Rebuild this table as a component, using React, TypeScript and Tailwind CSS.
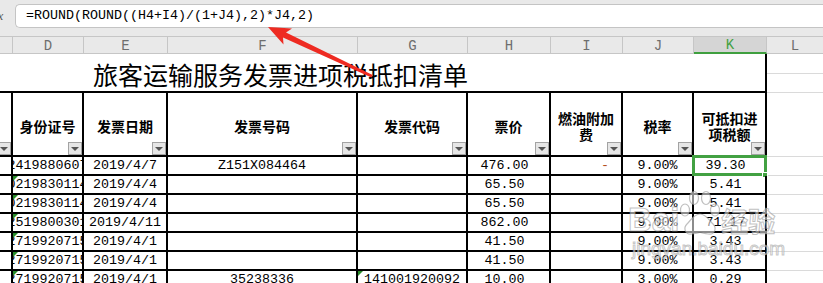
import React from "react";

const GRID = "grid grid-cols-[13px_71px_84px_190px_110px_83px_72px_71px_73px_56px]";
const MONO = "font-['Liberation_Mono',monospace]";
const CJK = "font-['Noto_Sans_CJK_SC','Noto_Sans',sans-serif]";

type Row = {
  id: string;
  date: string;
  no?: string;
  code?: string;
  price: string;
  fuel?: string;
  rate: string;
  tax: string;
  tri?: boolean;
  codeTri?: boolean;
  sel?: boolean;
};

const rows: Row[] = [
  { id: "410224198806070517", date: "2019/4/7", no: "Z151X084464", price: "476.00\u00a0", fuel: "-", rate: "9.00%", tax: "39.30\u00a0", sel: true },
  { id: "410502198301142036", date: "2019/4/4", price: "65.50\u00a0", rate: "9.00%", tax: "5.41\u00a0", tri: true },
  { id: "410502198301142036", date: "2019/4/4", price: "65.50\u00a0", rate: "9.00%", tax: "5.41\u00a0", tri: true },
  { id: "410425198003011518", date: "2019/4/11", price: "862.00\u00a0", rate: "9.00%", tax: "71.17\u00a0", tri: true },
  { id: "410527199207153021", date: "2019/4/1", price: "41.50\u00a0", rate: "9.00%", tax: "3.43\u00a0", tri: true },
  { id: "410527199207153021", date: "2019/4/1", price: "41.50\u00a0", rate: "9.00%", tax: "3.43\u00a0", tri: true },
  { id: "410527199207153021", date: "2019/4/1", no: "35238336", code: "141001920092", price: "10.00\u00a0", rate: "3.00%", tax: "0.29\u00a0", tri: true, codeTri: true },
];

function FilterBtn() {
  return (
    <div className="absolute right-0 bottom-0 w-[14px] h-[13px] bg-[#e6e6e6] border border-[#a3a3a3] flex items-center justify-center">
      <div className="w-0 h-0 border-l-[4px] border-r-[4px] border-t-[4px] border-l-transparent border-r-transparent border-t-[#555555] mt-[1px]" />
    </div>
  );
}

function HCell({ children }: { children?: React.ReactNode }) {
  return (
    <div className="relative h-[64px] border-r-2 border-b-2 border-black overflow-hidden flex items-center justify-center text-center pt-[3px] text-[14px] font-bold leading-[16px] text-black">
      {children}
      <FilterBtn />
    </div>
  );
}

function DCell({ children, className }: { children?: React.ReactNode; className?: string }) {
  return (
    <div className={"relative h-[19px] border-r-2 border-b-2 border-black overflow-hidden whitespace-nowrap flex items-center leading-[17px] " + (className ?? "justify-center")}>
      {children}
    </div>
  );
}

function Tri() {
  return <div className="absolute left-0 top-0 w-0 h-0 border-t-[5px] border-r-[5px] border-t-[#2a8c2a] border-r-transparent" />;
}

export default function App() {
  const letters = ["", "D", "E", "F", "G", "H", "I", "J", "K", "L"];
  return (
    <div className={"relative w-[823px] h-[283px] overflow-hidden bg-white text-black " + CJK}>
      {/* formula bar */}
      <div className="h-[36px] bg-[#e9e9e9] pt-[4px] flex">
        <div className="w-[15px] h-[24px] overflow-hidden flex items-center">
          <span className="ml-[-6px] text-[13px] italic text-[#5a5a5a] font-['Liberation_Serif',serif]">fx</span>
        </div>
        <div className={"flex-1 h-[24px] bg-white border border-r-0 border-[#c4c4c4] rounded-l-[5px] flex items-center pl-[10px] text-[13.33px] " + MONO}>
          =ROUND(ROUND((H4+I4)/(1+J4),2)*J4,2)
        </div>
      </div>

      {/* column headers */}
      <div className={GRID + " border-t border-[#c6c6c6] bg-[#e9e9e9]"}>
        {letters.map((l, i) => (
          <div
            key={i}
            className={
              "h-[17px] flex items-center justify-center text-[14px] leading-none pt-[1px] " +
              MONO +
              (l === "K"
                ? " bg-[#d5d5d5] text-[#3f9f3f] border-b-2 border-b-[#3f9f3f] border-r border-r-[#c6c6c6]"
                : l === "L"
                ? " text-[#6e6e6e] border-b border-[#c6c6c6]"
                : " text-[#6e6e6e] border-b border-r border-[#c6c6c6]")
            }
          >
            {l}
          </div>
        ))}
      </div>

      {/* title */}
      <div className="flex">
        <div className="w-[767px] h-[39px] border-r-2 border-b-2 border-black flex items-center pl-[93px] pt-[3px] text-[25px] leading-none">
          旅客运输服务发票进项税抵扣清单
        </div>
        <div className="flex-1 flex flex-col">
          <div className="h-[20px] border-b border-[#dadada]" />
          <div className="h-[19px] border-b border-[#dadada]" />
        </div>
      </div>

      {/* header row */}
      <div className={GRID}>
        <HCell />
        <HCell>身份证号</HCell>
        <HCell>发票日期</HCell>
        <HCell>发票号码</HCell>
        <HCell>发票代码</HCell>
        <HCell>票价</HCell>
        <HCell>
          燃油附加
          <br />费
        </HCell>
        <HCell>税率</HCell>
        <HCell>
          可抵扣进
          <br />项税额
        </HCell>
        <div className="h-[64px] border-b border-[#dadada]" />
      </div>

      {/* data rows */}
      <div className={"text-[13.33px] " + MONO}>
        {rows.map((r, i) => (
          <div key={i} className={GRID}>
            <DCell />
            <DCell>
              {r.tri && <Tri />}
              {r.id}
            </DCell>
            <DCell>{r.date}</DCell>
            <DCell>{r.no}</DCell>
            <DCell>
              {r.codeTri && <Tri />}
              {r.code}
            </DCell>
            <DCell>{r.price}</DCell>
            <DCell className="justify-end pr-[12px]">
              {r.fuel && <span className="text-[#b4501a]">{r.fuel}</span>}
            </DCell>
            <DCell>{r.rate}</DCell>
            <div className="relative h-[19px] border-r-2 border-b-2 border-black whitespace-nowrap flex items-center justify-center leading-[17px]">
              {r.tax}
              {r.sel && (
                <>
                  <div className="absolute -left-[2px] -top-[2px] -right-[2px] -bottom-[2px] border-[3px] border-[#42a142]" />
                  <div className="absolute -right-[3px] -bottom-[4px] w-[6px] h-[6px] bg-[#42a142] border border-white" />
                </>
              )}
            </div>
            <div className="h-[19px] border-b border-[#dadada]" />
          </div>
        ))}
      </div>

      {/* watermark */}
      <div className="absolute left-[628px] top-[190px] pointer-events-none flex flex-col">
        <div className="flex items-end">
          <span className="font-['Liberation_Sans',sans-serif] font-bold text-[33px] leading-none text-[rgba(255,255,255,0.55)] [-webkit-text-stroke:1px_rgba(150,150,150,0.6)]">
            Bai
          </span>
          <svg width="44" height="46" viewBox="0 0 44 46" className="mx-[-1px]">
            <g fill="rgba(255,255,255,0.55)" stroke="rgba(150,150,150,0.6)" strokeWidth="1.2">
              <ellipse cx="7" cy="20" rx="4.5" ry="6" />
              <ellipse cx="16" cy="8" rx="4.5" ry="6.5" />
              <ellipse cx="28" cy="8" rx="4.5" ry="6.5" />
              <ellipse cx="37" cy="20" rx="4.5" ry="6" />
              <path d="M22 24 C16 24 13 30 9 34 C5 38 7 45 14 44 C18 43.5 20 42.5 22 42.5 C24 42.5 26 43.5 30 44 C37 45 39 38 35 34 C31 30 28 24 22 24 Z" />
            </g>
          </svg>
          <span className="text-[27px] leading-none font-bold text-[rgba(255,255,255,0.55)] [-webkit-text-stroke:1px_rgba(150,150,150,0.6)] mb-[2px]">
            经验
          </span>
        </div>
        <span className="mt-[3px] ml-[4px] font-['Liberation_Sans',sans-serif] text-[19px] leading-none text-[rgba(255,255,255,0.55)] [-webkit-text-stroke:1px_rgba(150,150,150,0.55)]">
          jingyan.baidu.com
        </span>
      </div>

      {/* red arrow */}
      <svg className="absolute left-0 top-0 pointer-events-none" width="823" height="283">
        <polygon
          points="268,27 292,28.5 286,32.6 372.6,75 371.4,77.4 283,37.5 283.5,44.5"
          fill="#ee2b22"
        />
      </svg>
    </div>
  );
}
